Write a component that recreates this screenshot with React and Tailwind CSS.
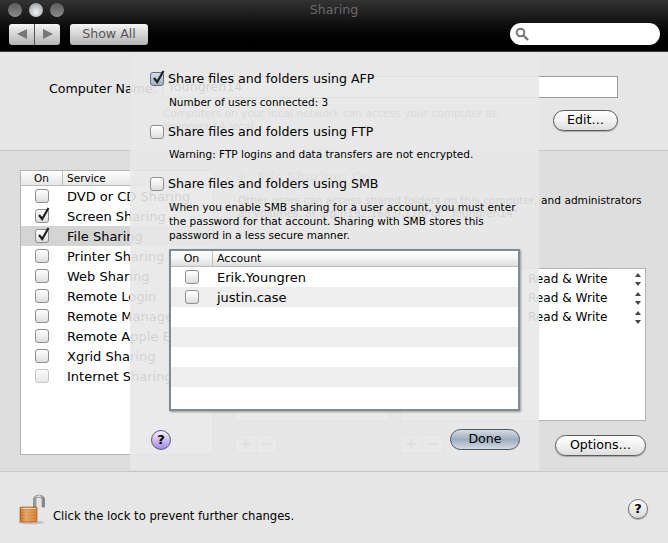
import React from 'react';

const services = [
  { name: 'DVD or CD Sharing' },
  { name: 'Screen Sharing', on: true },
  { name: 'File Sharing', on: true, selected: true },
  { name: 'Printer Sharing' },
  { name: 'Web Sharing' },
  { name: 'Remote Login' },
  { name: 'Remote Management' },
  { name: 'Remote Apple Events' },
  { name: 'Xgrid Sharing' },
  { name: 'Internet Sharing', disabled: true },
];

const CheckBox = ({ checked, blue, disabled }) => (
  <span
    className={`relative block w-[14px] h-[14px] shrink-0 rounded-[3px] border ${
      blue
        ? 'border-[#5f6f82] bg-gradient-to-b from-[#d5deea] to-[#9fb1c8]'
        : disabled
          ? 'border-[#c4c4c4] bg-gradient-to-b from-[#fbfbfb] to-[#e8e8e8]'
          : 'border-[#8e8e8e] bg-gradient-to-b from-[#ffffff] via-[#f0f0f0] to-[#dcdcdc]'
    }`}
  >
    {checked && (
      <svg className="absolute left-[1px] top-[-4px]" width="14" height="16" viewBox="0 0 14 16">
        <path d="M2 9 L5.2 13 L11.5 2" fill="none" stroke="#222" strokeWidth="2.2" />
      </svg>
    )}
  </span>
);

const TrafficLight = ({ light }) => (
  <span
    className={`block w-[14px] h-[14px] rounded-full ${
      light
        ? 'bg-[radial-gradient(circle_at_50%_65%,#f2f4f6,#a9adb2_70%,#6e7074)]'
        : 'bg-gradient-to-b from-[#5c5c5c] to-[#8c8c8c]'
    }`}
  />
);

const Stepper = () => (
  <svg className="ml-auto" width="8" height="15" viewBox="0 0 8 15">
    <path d="M4 1 L7 5 H1 Z M1 10 H7 L4 14 Z" fill="#444" />
  </svg>
);

const AquaButton = ({ label, className }) => (
  <button
    className={`flex items-center justify-center rounded-full border border-[#5c5c5c] bg-gradient-to-b from-[#ffffff] via-[#f2f2f2] to-[#dddddd] text-[12.6px] text-black shadow-[0_1px_1px_rgba(0,0,0,0.25)] ${className}`}
  >
    {label}
  </button>
);

const PlusMinus = ({ className }) => (
  <div className={`flex w-[44px] h-[19px] border border-[#b8b8b8] bg-[#eeeeee] text-[15px] font-bold leading-[16px] text-[#888] ${className}`}>
    <span className="flex-1 text-center border-r border-[#b8b8b8]">+</span>
    <span className="flex-1 text-center">−</span>
  </div>
);

const Lock = () => (
  <svg width="28" height="32" viewBox="0 0 28 32" className="shrink-0">
    <defs>
      <linearGradient id="lockBody" x1="0" y1="0" x2="1" y2="0">
        <stop offset="0" stopColor="#b9601c" />
        <stop offset="0.35" stopColor="#e9a25c" />
        <stop offset="1" stopColor="#c8762e" />
      </linearGradient>
      <linearGradient id="shackle" x1="0" y1="0" x2="1" y2="0">
        <stop offset="0" stopColor="#8a8a8a" />
        <stop offset="0.5" stopColor="#e6e6e6" />
        <stop offset="1" stopColor="#6f6f6f" />
      </linearGradient>
    </defs>
    <ellipse cx="13" cy="29.5" rx="13" ry="1.8" fill="#000" opacity="0.16" />
    <path d="M15.5 15 V6.5 C15.5 0.5 26.5 0.5 26.5 6.5 V14 H24 V6.5 C24 3.8 18 3.8 18 6.5 V15 Z" fill="url(#shackle)" stroke="#666" strokeWidth="0.5" />
    <rect x="2" y="14" width="17" height="15" rx="1" fill="url(#lockBody)" stroke="#a3581c" strokeWidth="0.6" />
    <path d="M3 18 H18 M3 21 H18 M3 24 H18 M3 27 H18" stroke="#f3bd85" strokeWidth="0.7" opacity="0.7" />
    <path d="M3 15.5 H18" stroke="#f8d4a8" strokeWidth="1" />
  </svg>
);

export default function App() {
  return (
    <div className="relative w-[668px] h-[543px] overflow-hidden bg-[#e6e6e6] font-['DejaVu_Sans',sans-serif] text-[12.6px] text-black">
      {/* toolbar */}
      <header className="relative h-[52px] border-b border-[#3c3c3c] bg-gradient-to-b from-[#333333] via-[#0e0e0e] to-[#000000]">
        <div className="flex gap-[7px] pl-2 pt-[3px]">
          <TrafficLight />
          <TrafficLight light />
          <TrafficLight />
        </div>
        <div className="absolute left-0 right-0 top-[1px] text-center text-[12.6px] text-[#6a6a6a]">Sharing</div>
        <div className="flex items-center pl-[9px] pt-[6px] pr-2">
          <div className="flex w-[51px] h-[21px] rounded-[3px] bg-gradient-to-b from-[#f4f4f4] to-[#b4b4b4]">
            <span className="flex flex-1 items-center justify-center border-r border-[#555]">
              <svg width="12" height="10" viewBox="0 0 12 10"><path d="M11 0 V10 L1 5 Z" fill="#777" /></svg>
            </span>
            <span className="flex flex-1 items-center justify-center">
              <svg width="12" height="10" viewBox="0 0 12 10"><path d="M1 0 V10 L11 5 Z" fill="#777" /></svg>
            </span>
          </div>
          <div className="ml-[10px] flex w-[78px] h-[21px] items-center justify-center rounded-[3px] bg-gradient-to-b from-[#f4f4f4] to-[#b4b4b4] text-[12.6px] text-[#555]">
            Show All
          </div>
          <div className="ml-auto flex w-[150px] h-[22px] items-center rounded-full bg-white pl-[5px]">
            <svg width="14" height="14" viewBox="0 0 14 14">
              <circle cx="5.5" cy="5.5" r="3.8" fill="none" stroke="#777" strokeWidth="2" />
              <path d="M8.5 8.5 L13 13" stroke="#777" strokeWidth="2.4" />
            </svg>
          </div>
        </div>
      </header>

      {/* computer name */}
      <section className="h-[99px] border-b border-[#c9c9c9] pt-[24px]">
        <div className="flex">
          <div className="ml-[49px] w-[114px] pt-[1px] leading-[24px]">Computer Name:</div>
          <div className="w-[455px] h-[22px] border border-[#9a9a9a] bg-white pl-1 leading-[20px]">Youngren14</div>
        </div>
        <div className="flex">
          <div className="ml-[163px] w-[390px] pt-[6px] text-[10.6px] leading-[13px] text-[#555]">
            <p>Computers on your local network can access your computer at:</p>
            <p>Youngren14.local</p>
          </div>
          <AquaButton label="Edit…" className="mt-[9px] w-[65px] h-[21px]" />
        </div>
      </section>

      {/* services + file sharing details */}
      <section className="flex h-[321px] border-b border-[#c9c9c9] bg-[#dedede]">
        <div className="ml-5 mt-[19px] w-[194px] h-[285px] border border-[#b3b3b3] bg-white">
          <div className="flex h-[15px] border-b border-[#bdbdbd] bg-gradient-to-b from-[#ffffff] to-[#e6e6e6] text-[10.5px] leading-[15px]">
            <span className="w-[42px] border-r border-[#bdbdbd] text-center">On</span>
            <span className="pl-[4px]">Service</span>
          </div>
          {services.map((s) => (
            <div key={s.name} className={`flex h-5 items-center whitespace-nowrap ${s.selected ? 'bg-[#d4d4d4]' : ''}`}>
              <span className="ml-[14px] w-[32px]"><CheckBox checked={s.on} disabled={s.disabled} /></span>
              <span className="pt-[2px] text-[13px]">{s.name}</span>
            </div>
          ))}
        </div>

        <div className="ml-5 w-[412px] pt-[17px]">
          <div className="flex items-center pl-[3px] text-[#999]">
            <span className="w-[10px] h-[10px] rounded-full bg-[#9ad88a]" />
            <span className="ml-[10px] font-bold">File Sharing: On</span>
          </div>
          <p className="mt-[7px] pl-1 text-[10.6px] leading-[13px] whitespace-nowrap">
            Other users can access shared folders on this computer, and administrators
            <br />
            all volumes, at afp://192.168.0.118/ or "Youngren14".
          </p>
          <div className="mt-[27px] flex text-[10.6px] leading-[13px]">
            <span className="w-[166px]">Shared Folders:</span>
            <span>Users:</span>
          </div>
          <div className="mt-2 flex gap-[10px]">
            <div className="w-[156px] h-[153px] border border-[#b3b3b3] bg-white" />
            <div className="w-[246px] h-[153px] border border-[#b3b3b3] bg-white pl-[127px] pr-[3px] pt-[1px]">
              {[0, 1, 2].map((i) => (
                <div key={i} className="flex h-[19px] items-center text-[12.1px]">
                  <span>Read &amp; Write</span>
                  <Stepper />
                </div>
              ))}
            </div>
          </div>
          <div className="mt-[14px] flex items-start">
            <PlusMinus />
            <PlusMinus className="ml-[122px]" />
            <AquaButton label="Options…" className="ml-[111px] w-[91px] h-[21px]" />
          </div>
        </div>
      </section>

      {/* lock bar */}
      <footer className="flex h-[71px] items-start pl-[18px] pr-[20px] pt-[21px]">
        <Lock />
        <span className="ml-[7px] mt-[15px] text-[11.6px] whitespace-nowrap">Click the lock to prevent further changes.</span>
        <span className="ml-auto mt-[6px] flex w-5 h-5 items-center justify-center rounded-full border border-[#777] bg-gradient-to-b from-[#ffffff] to-[#d8d8d8] text-[13px] font-bold shadow-[0_1px_1px_rgba(0,0,0,0.3)]">?</span>
      </footer>

      {/* sheet */}
      <div className="absolute left-[130px] top-[52px] w-[409px] h-[418px] bg-[#e8e8e8]/90 pl-5 pt-5">
        <div className="flex items-center h-[14px] gap-1">
          <CheckBox checked blue />
          <span className="whitespace-nowrap">Share files and folders using AFP</span>
        </div>
        <p className="mt-[9px] ml-[19px] text-[10.5px] leading-[14px]">Number of users connected: 3</p>
        <div className="mt-4 flex items-center h-[14px] gap-1">
          <CheckBox />
          <span className="whitespace-nowrap">Share files and folders using FTP</span>
        </div>
        <p className="mt-[8px] ml-[19px] text-[10.5px] leading-[14px]">Warning: FTP logins and data transfers are not encrypted.</p>
        <div className="mt-4 flex items-center h-[14px] gap-1">
          <CheckBox />
          <span className="whitespace-nowrap">Share files and folders using SMB</span>
        </div>
        <p className="mt-[9px] ml-[19px] text-[10.5px] leading-[14px] whitespace-nowrap">
          When you enable SMB sharing for a user account, you must enter
          <br />
          the password for that account. Sharing with SMB stores this
          <br />
          password in a less secure manner.
        </p>

        <div className="mt-[7px] ml-[19px] w-[351px] h-[162px] border-2 border-[#7f8b94] bg-white shadow-[1px_1px_2px_rgba(0,0,0,0.35)]">
          <div className="flex h-[16px] border-b border-[#bdbdbd] bg-gradient-to-b from-[#ffffff] via-[#f4f4f4] to-[#dedede] text-[11px] leading-[16px]">
            <span className="w-[42px] border-r border-[#bdbdbd] text-center">On</span>
            <span className="pl-[4px]">Account</span>
          </div>
          {['Erik.Youngren', 'justin.case', '', '', '', '', ''].map((name, i) => (
            <div key={i} className={`flex h-5 items-center ${i % 2 ? 'bg-[#eeeeee]' : 'bg-white'}`}>
              {name && (
                <>
                  <span className="ml-[14px] w-[32px]"><CheckBox /></span>
                  <span className="pt-[2px] text-[13px]">{name}</span>
                </>
              )}
            </div>
          ))}
        </div>

        <div className="mt-[18px] flex items-center pl-[1px] pr-[19px]">
          <span className="flex w-5 h-5 items-center justify-center rounded-full border border-[#5d5a78] bg-gradient-to-b from-[#f4efff] to-[#a78be0] text-[13px] font-bold">?</span>
          <button className="ml-auto w-[70px] h-[21px] rounded-full border border-[#4c5866] bg-gradient-to-b from-[#d7dde4] via-[#9eadbd] to-[#d3dbe4] text-[12.6px]">
            Done
          </button>
        </div>
      </div>
    </div>
  );
}
